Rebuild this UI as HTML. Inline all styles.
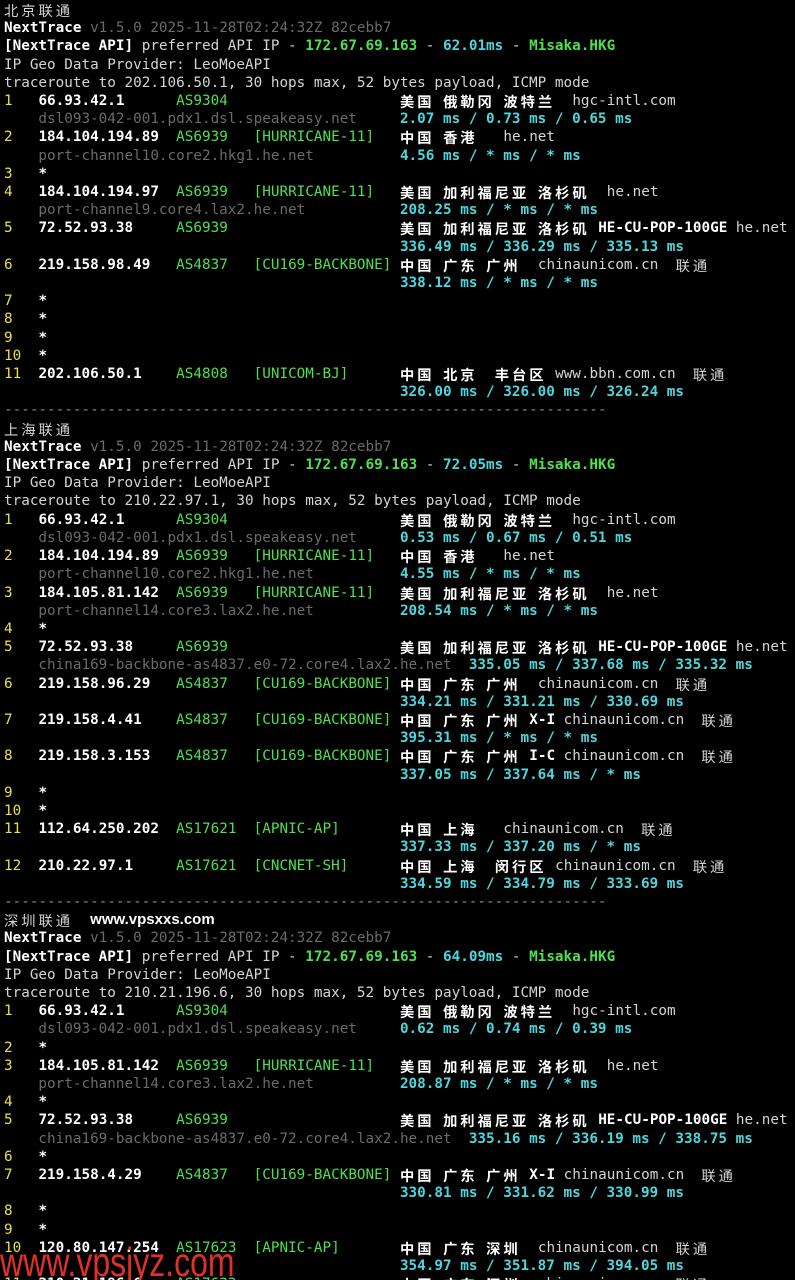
<!DOCTYPE html>
<html><head><meta charset="utf-8">
<style>
html,body{margin:0;padding:0;background:#000;width:795px;height:1280px;overflow:hidden;position:relative}
pre{margin:1px 0 0 4px;font-family:"DejaVu Sans Mono","Liberation Mono",monospace;font-size:14.3px;line-height:18.2px;color:#d4d4d4;white-space:pre}
.z{font-family:"Noto Sans CJK SC","WenQuanYi Zen Hei",sans-serif;letter-spacing:2.94px;display:inline-block;height:18.2px;line-height:18.2px;vertical-align:top;overflow:visible;position:relative;top:1px}
.y{color:#e8e04a}
.w{color:#fff;font-weight:bold}
.g{color:#4fe04f;font-weight:bold}
.g2{color:#4fe04f}
.d{color:#6a6a6a}
.c{color:#4fd6dc;font-weight:bold}
.n{color:#d4d4d4}
.s{color:#8a8a8a}
.wm{position:absolute;left:0;top:1238px;font-family:"Liberation Sans",sans-serif;font-size:41px;color:#e0302a;transform:scaleX(0.78);transform-origin:0 0;white-space:nowrap}
.wm2{font-family:"Liberation Sans",sans-serif;font-weight:bold;color:#fff;font-size:15px;display:inline-block;height:18.2px;vertical-align:top}
</style></head><body>
<pre><span class="z n">北京联通</span>
<span class="w">NextTrace</span><span class="d"> v1.5.0 2025-11-28T02:24:32Z 82cebb7</span>
<span class="w">[NextTrace API]</span> preferred API IP - <span class="g">172.67.69.163</span> - <span class="c">62.01ms</span> - <span class="g">Misaka.HKG</span>
IP Geo Data Provider: LeoMoeAPI
traceroute to 202.106.50.1, 30 hops max, 52 bytes payload, ICMP mode
<span class="y">1   </span><span class="w">66.93.42.1      </span><span class="g2">AS9304                    </span><b class="z w">美国</b> <b class="z w">俄勒冈</b> <b class="z w">波特兰</b>  hgc-intl.com
<span class="d">    dsl093-042-001.pdx1.dsl.speakeasy.net     </span><span class="c">2.07 ms / 0.73 ms / 0.65 ms</span>
<span class="y">2   </span><span class="w">184.104.194.89  </span><span class="g2">AS6939   [HURRICANE-11]   </span><b class="z w">中国</b> <b class="z w">香港</b>   he.net
<span class="d">    port-channel10.core2.hkg1.he.net          </span><span class="c">4.56 ms / * ms / * ms</span>
<span class="y">3   </span><span class="w">*</span>
<span class="y">4   </span><span class="w">184.104.194.97  </span><span class="g2">AS6939   [HURRICANE-11]   </span><b class="z w">美国</b> <b class="z w">加利福尼亚</b> <b class="z w">洛杉矶</b>  he.net
<span class="d">    port-channel9.core4.lax2.he.net           </span><span class="c">208.25 ms / * ms / * ms</span>
<span class="y">5   </span><span class="w">72.52.93.38     </span><span class="g2">AS6939                    </span><b class="z w">美国</b> <b class="z w">加利福尼亚</b> <b class="z w">洛杉矶</b> <span class="w">HE-CU-POP-100GE</span> he.net
                                              <span class="c">336.49 ms / 336.29 ms / 335.13 ms</span>
<span class="y">6   </span><span class="w">219.158.98.49   </span><span class="g2">AS4837   [CU169-BACKBONE] </span><b class="z w">中国</b> <b class="z w">广东</b> <b class="z w">广州</b>  chinaunicom.cn  <span class="z">联通</span>
                                              <span class="c">338.12 ms / * ms / * ms</span>
<span class="y">7   </span><span class="w">*</span>
<span class="y">8   </span><span class="w">*</span>
<span class="y">9   </span><span class="w">*</span>
<span class="y">10  </span><span class="w">*</span>
<span class="y">11  </span><span class="w">202.106.50.1    </span><span class="g2">AS4808   [UNICOM-BJ]      </span><b class="z w">中国</b> <b class="z w">北京</b>  <b class="z w">丰台区</b> www.bbn.com.cn  <span class="z">联通</span>
                                              <span class="c">326.00 ms / 326.00 ms / 326.24 ms</span>
<span class="s">----------------------------------------------------------------------</span>
<span class="z n">上海联通</span>
<span class="w">NextTrace</span><span class="d"> v1.5.0 2025-11-28T02:24:32Z 82cebb7</span>
<span class="w">[NextTrace API]</span> preferred API IP - <span class="g">172.67.69.163</span> - <span class="c">72.05ms</span> - <span class="g">Misaka.HKG</span>
IP Geo Data Provider: LeoMoeAPI
traceroute to 210.22.97.1, 30 hops max, 52 bytes payload, ICMP mode
<span class="y">1   </span><span class="w">66.93.42.1      </span><span class="g2">AS9304                    </span><b class="z w">美国</b> <b class="z w">俄勒冈</b> <b class="z w">波特兰</b>  hgc-intl.com
<span class="d">    dsl093-042-001.pdx1.dsl.speakeasy.net     </span><span class="c">0.53 ms / 0.67 ms / 0.51 ms</span>
<span class="y">2   </span><span class="w">184.104.194.89  </span><span class="g2">AS6939   [HURRICANE-11]   </span><b class="z w">中国</b> <b class="z w">香港</b>   he.net
<span class="d">    port-channel10.core2.hkg1.he.net          </span><span class="c">4.55 ms / * ms / * ms</span>
<span class="y">3   </span><span class="w">184.105.81.142  </span><span class="g2">AS6939   [HURRICANE-11]   </span><b class="z w">美国</b> <b class="z w">加利福尼亚</b> <b class="z w">洛杉矶</b>  he.net
<span class="d">    port-channel14.core3.lax2.he.net          </span><span class="c">208.54 ms / * ms / * ms</span>
<span class="y">4   </span><span class="w">*</span>
<span class="y">5   </span><span class="w">72.52.93.38     </span><span class="g2">AS6939                    </span><b class="z w">美国</b> <b class="z w">加利福尼亚</b> <b class="z w">洛杉矶</b> <span class="w">HE-CU-POP-100GE</span> he.net
<span class="d">    china169-backbone-as4837.e0-72.core4.lax2.he.net  </span><span class="c">335.05 ms / 337.68 ms / 335.32 ms</span>
<span class="y">6   </span><span class="w">219.158.96.29   </span><span class="g2">AS4837   [CU169-BACKBONE] </span><b class="z w">中国</b> <b class="z w">广东</b> <b class="z w">广州</b>  chinaunicom.cn  <span class="z">联通</span>
                                              <span class="c">334.21 ms / 331.21 ms / 330.69 ms</span>
<span class="y">7   </span><span class="w">219.158.4.41    </span><span class="g2">AS4837   [CU169-BACKBONE] </span><b class="z w">中国</b> <b class="z w">广东</b> <b class="z w">广州</b> <span class="w">X-I</span> chinaunicom.cn  <span class="z">联通</span>
                                              <span class="c">395.31 ms / * ms / * ms</span>
<span class="y">8   </span><span class="w">219.158.3.153   </span><span class="g2">AS4837   [CU169-BACKBONE] </span><b class="z w">中国</b> <b class="z w">广东</b> <b class="z w">广州</b> <span class="w">I-C</span> chinaunicom.cn  <span class="z">联通</span>
                                              <span class="c">337.05 ms / 337.64 ms / * ms</span>
<span class="y">9   </span><span class="w">*</span>
<span class="y">10  </span><span class="w">*</span>
<span class="y">11  </span><span class="w">112.64.250.202  </span><span class="g2">AS17621  [APNIC-AP]       </span><b class="z w">中国</b> <b class="z w">上海</b>   chinaunicom.cn  <span class="z">联通</span>
                                              <span class="c">337.33 ms / 337.20 ms / * ms</span>
<span class="y">12  </span><span class="w">210.22.97.1     </span><span class="g2">AS17621  [CNCNET-SH]      </span><b class="z w">中国</b> <b class="z w">上海</b>  <b class="z w">闵行区</b> chinaunicom.cn  <span class="z">联通</span>
                                              <span class="c">334.59 ms / 334.79 ms / 333.69 ms</span>
<span class="s">----------------------------------------------------------------------</span>
<span class="z n">深圳联通</span>  <span class="wm2">www.vpsxxs.com</span>
<span class="w">NextTrace</span><span class="d"> v1.5.0 2025-11-28T02:24:32Z 82cebb7</span>
<span class="w">[NextTrace API]</span> preferred API IP - <span class="g">172.67.69.163</span> - <span class="c">64.09ms</span> - <span class="g">Misaka.HKG</span>
IP Geo Data Provider: LeoMoeAPI
traceroute to 210.21.196.6, 30 hops max, 52 bytes payload, ICMP mode
<span class="y">1   </span><span class="w">66.93.42.1      </span><span class="g2">AS9304                    </span><b class="z w">美国</b> <b class="z w">俄勒冈</b> <b class="z w">波特兰</b>  hgc-intl.com
<span class="d">    dsl093-042-001.pdx1.dsl.speakeasy.net     </span><span class="c">0.62 ms / 0.74 ms / 0.39 ms</span>
<span class="y">2   </span><span class="w">*</span>
<span class="y">3   </span><span class="w">184.105.81.142  </span><span class="g2">AS6939   [HURRICANE-11]   </span><b class="z w">美国</b> <b class="z w">加利福尼亚</b> <b class="z w">洛杉矶</b>  he.net
<span class="d">    port-channel14.core3.lax2.he.net          </span><span class="c">208.87 ms / * ms / * ms</span>
<span class="y">4   </span><span class="w">*</span>
<span class="y">5   </span><span class="w">72.52.93.38     </span><span class="g2">AS6939                    </span><b class="z w">美国</b> <b class="z w">加利福尼亚</b> <b class="z w">洛杉矶</b> <span class="w">HE-CU-POP-100GE</span> he.net
<span class="d">    china169-backbone-as4837.e0-72.core4.lax2.he.net  </span><span class="c">335.16 ms / 336.19 ms / 338.75 ms</span>
<span class="y">6   </span><span class="w">*</span>
<span class="y">7   </span><span class="w">219.158.4.29    </span><span class="g2">AS4837   [CU169-BACKBONE] </span><b class="z w">中国</b> <b class="z w">广东</b> <b class="z w">广州</b> <span class="w">X-I</span> chinaunicom.cn  <span class="z">联通</span>
                                              <span class="c">330.81 ms / 331.62 ms / 330.99 ms</span>
<span class="y">8   </span><span class="w">*</span>
<span class="y">9   </span><span class="w">*</span>
<span class="y">10  </span><span class="w">120.80.147.254  </span><span class="g2">AS17623  [APNIC-AP]       </span><b class="z w">中国</b> <b class="z w">广东</b> <b class="z w">深圳</b>  chinaunicom.cn  <span class="z">联通</span>
                                              <span class="c">354.97 ms / 351.87 ms / 394.05 ms</span>
<span class="y">11  </span><span class="w">210.21.196.6    </span><span class="g2">AS17623                   </span><b class="z w">中国</b> <b class="z w">广东</b> <b class="z w">深圳</b>  chinaunicom.cn  <span class="z">联通</span></pre>
<div class="wm">www.vpsjyz.com</div>
</body></html>
